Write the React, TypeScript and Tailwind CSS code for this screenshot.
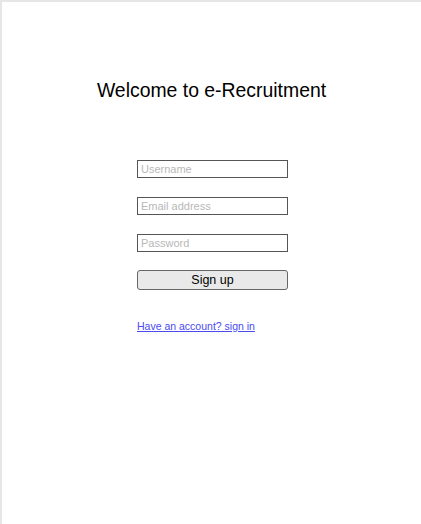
import React from "react";

const Field: React.FC<{ type?: string; placeholder: string }> = ({ type = "text", placeholder }) => (
  <input
    type={type}
    placeholder={placeholder}
    className="block w-[151px] h-[18px] border border-[#555] bg-white pl-[3px] pr-[2px] text-[11px] text-black placeholder:text-[#b8b8b8] outline-none"
  />
);

const App: React.FC = () => {
  return (
    <div
      className="min-h-screen h-[524px] bg-white border-t-2 border-l-2 border-[#e6e6e6] flex flex-col items-center"
      style={{ fontFamily: '"Liberation Sans", Arial, sans-serif' }}
    >
      <h1 className="mt-[77px] text-[19.4px] leading-[23px] text-black">Welcome to e-Recruitment</h1>

      <form className="mt-[58px] ml-[2px] flex flex-col gap-[19px]" onSubmit={(e) => e.preventDefault()}>
        <Field placeholder="Username" />
        <Field type="email" placeholder="Email address" />
        <Field type="password" placeholder="Password" />
        <button
          type="submit"
          className="block w-[151px] h-[20px] -mt-[1px] rounded-[3px] border border-[#666] bg-[#e9e9e9] text-[12.5px] leading-[18px] text-black"
        >
          Sign up
        </button>
        <a href="#" className="mt-[11px] text-[10.5px] leading-[13px] text-[#4a4af0] underline">
          Have an account? sign in
        </a>
      </form>
    </div>
  );
};

export default App;
